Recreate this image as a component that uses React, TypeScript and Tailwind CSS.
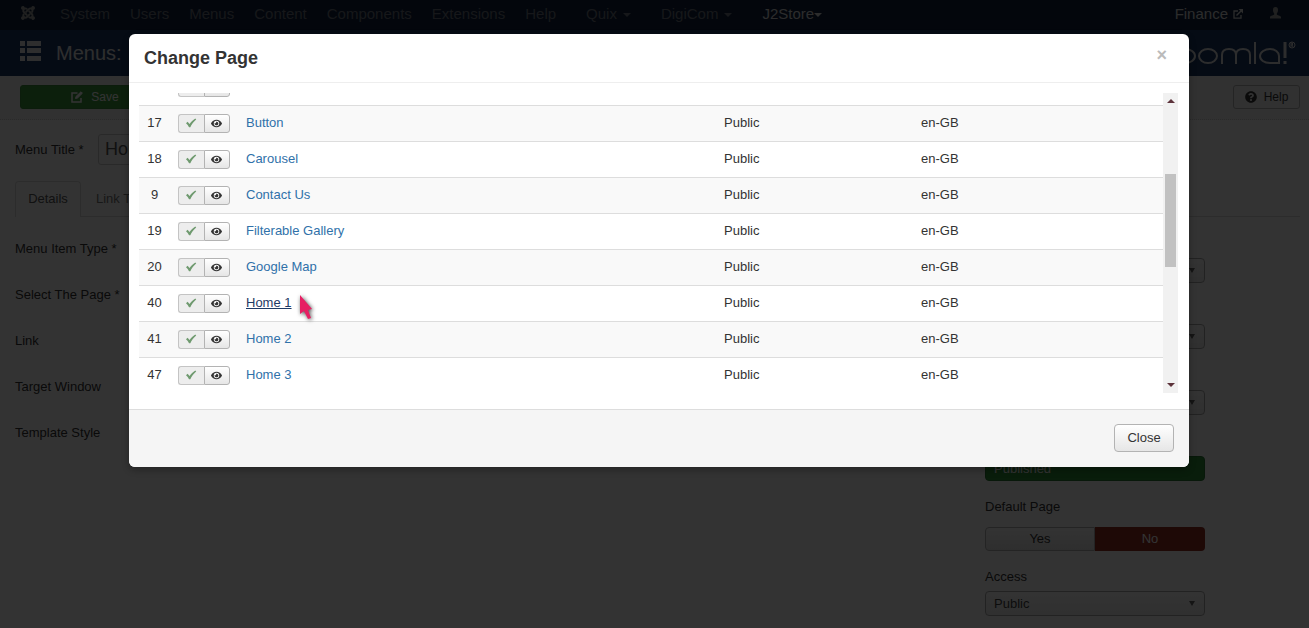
import type { ReactNode } from 'react'
import { FaEye, FaJoomla, FaQuestionCircle } from 'react-icons/fa'

type Page = { id: string; title: string; access: string; language: string; active?: boolean }

const pages: Page[] = [
  { id: '', title: '', access: '', language: '' },
  { id: '17', title: 'Button', access: 'Public', language: 'en-GB' },
  { id: '18', title: 'Carousel', access: 'Public', language: 'en-GB' },
  { id: '9', title: 'Contact Us', access: 'Public', language: 'en-GB' },
  { id: '19', title: 'Filterable Gallery', access: 'Public', language: 'en-GB' },
  { id: '20', title: 'Google Map', access: 'Public', language: 'en-GB' },
  { id: '40', title: 'Home 1', access: 'Public', language: 'en-GB', active: true },
  { id: '41', title: 'Home 2', access: 'Public', language: 'en-GB' },
  { id: '47', title: 'Home 3', access: 'Public', language: 'en-GB' },
]

const coreMenus = ['System', 'Users', 'Menus', 'Content', 'Components', 'Extensions', 'Help']
const fieldLabels = ['Menu Item Type *', 'Select The Page *', 'Link', 'Target Window', 'Template Style']

function Caret() {
  return <span className="mt-px border-x-4 border-t-4 border-x-transparent border-t-current" />
}

function CheckIcon() {
  return (
    <svg viewBox="0 0 12 10" className="h-[10px] w-3" fill="currentColor">
      <path d="M1 5.200L2.600 3.700 4.500 5.900C6 3.800 8 1.800 10.300.4l.9 1C8.600 3.700 6.800 6 5.300 9.200H4C3.300 7.600 2.300 6.300 1 5.200z" />
    </svg>
  )
}

function ListIcon() {
  return (
    <svg viewBox="0 0 21 20" className="h-5 w-[21px]" fill="currentColor">
      <path d="M0 0h5v5H0zM7 0h14v5H7zM0 7h5v5H0zM7 7h14v5H7zM0 15h5v5H0zM7 15h14v5H7z" />
    </svg>
  )
}

function EditIcon() {
  return (
    <svg viewBox="0 0 12 12" className="size-3" fill="none" stroke="currentColor" strokeWidth="1.500">
      <path d="M6.500 2H1v9h9V7" />
      <path d="M4.500 7.500l.5-2L10 .8 11.400 2.200 6.500 7z" fill="currentColor" strokeWidth="1" />
    </svg>
  )
}

function ExternalIcon() {
  return (
    <svg viewBox="0 0 10 10" className="size-[10px]" fill="none" stroke="currentColor" strokeWidth="1.300">
      <path d="M5 2H1v7.200h7V6" />
      <path d="M3.500 6.500L8.500 1.500" strokeWidth="1.500" />
      <path d="M5.500 0H10v4.500z" fill="currentColor" stroke="none" />
    </svg>
  )
}

function TopBar() {
  return (
    <nav className="flex h-[30px] items-center bg-[#10223e] pr-7 pl-5 text-[15px] leading-5 text-[#6e7580]">
      <FaJoomla className="mr-6 mb-1 size-4 text-[#a0a0a0]" />
      <div className="flex flex-1 items-center gap-5 pb-[2px]">
        {coreMenus.map((m) => (
          <a key={m} href="#">
            {m}
          </a>
        ))}
        <a href="#" className="ml-[10px] flex items-center gap-[6px]">
          Quix <Caret />
        </a>
        <a href="#" className="ml-[10px] flex items-center gap-[6px]">
          DigiCom <Caret />
        </a>
        <a href="#" className="ml-[10px] flex items-center text-[#d9d9d9]">
          J2Store <Caret />
        </a>
      </div>
      <a href="#" className="flex items-center gap-[5px] pb-[2px] text-[#d9d9d9]">
        Finance <ExternalIcon />
      </a>
      <a href="#" aria-label="User menu" className="ml-[27px] pb-1 text-[#a0a0a0]">
        <svg viewBox="0 0 11 12" className="h-3 w-[11px]" fill="currentColor">
          <path d="M5.500 0C7.300 0 8 1.300 8 3c0 1.500-.5 2.700-1.200 3.400v1.100c.2.800 3.700 1 4.200 2.500v1.500H0V10c.5-1.500 4-1.700 4.200-2.500V6.400C3.500 5.700 3 4.500 3 3c0-1.700.7-3 2.500-3z" />
        </svg>
      </a>
    </nav>
  )
}

function Logo() {
  return (
    <svg viewBox="0 0 126 30" className="h-[30px] w-[126px]" fill="none" stroke="#e0e0e0" strokeWidth="2" role="img" aria-label="Joomla!">
      <ellipse cx="14" cy="18" rx="10" ry="7" />
      <ellipse cx="37" cy="18" rx="9" ry="7" />
      <path d="M51 26V17q0-6 7-6t7 6v9M65 17q0-6 7-6t7 6v9M84 4v22" />
      <path d="M108 26v-8c0-4-4-7-9-7s-10 3-10 7 4 7 10 7h9" />
      <path d="M114 4v16M114 23v3" strokeWidth="3" />
      <circle cx="121" cy="7" r="3" strokeWidth="1" />
      <path d="M120 9V5h1.500v2H120M121 7l1 2" strokeWidth="1" />
    </svg>
  )
}

function ChosenSelect({ label, value }: { label: string; value: string }) {
  return (
    <div className="relative">
      <select
        aria-label={label}
        className="h-[25px] w-full appearance-none rounded border border-[#aaa] bg-linear-to-b from-white to-[#eee] px-2 text-[#444]"
      >
        <option>{value}</option>
      </select>
      <span className="pointer-events-none absolute top-[10px] right-[10px] border-x-[3px] border-t-[5px] border-x-transparent border-t-[#666]" />
    </div>
  )
}

function Group({ label, children }: { label: string; children: ReactNode }) {
  return (
    <fieldset>
      <legend className="mb-[10px] leading-5">{label}</legend>
      {children}
    </fieldset>
  )
}

function Sidebar() {
  return (
    <aside className="mr-[104px] w-[220px] pt-[41px]">
      <div className="flex flex-col gap-[41px]">
        <ChosenSelect label="Menu" value="" />
        <ChosenSelect label="Parent item" value="" />
        <ChosenSelect label="Ordering" value="" />
        <select
          aria-label="Status"
          className="h-[25px] w-full appearance-none rounded border border-[#2b7a36] bg-[#2f8f3a] px-2 text-white"
        >
          <option>Published</option>
        </select>
      </div>
      <div className="mt-4">
        <Group label="Default Page">
          <div className="flex h-6">
            <button className="w-1/2 rounded-l border border-[#b3b3b3] bg-linear-to-b from-white to-[#e6e6e6]">Yes</button>
            <button className="w-1/2 rounded-r bg-[#952d22] text-white">No</button>
          </div>
        </Group>
      </div>
      <label className="mt-4 block">
        <span className="mb-1 block leading-5">Access</span>
        <ChosenSelect label="Access" value="Public" />
      </label>
    </aside>
  )
}

function EditScreen() {
  return (
    <div className="h-screen overflow-hidden bg-white">
      <TopBar />
      <header className="flex h-[46px] items-center bg-[#1a3867] pr-3 pl-5 text-[#e6e6e6]">
        <span className="mb-1">
          <ListIcon />
        </span>
        <h1 className="ml-[15px] flex-1 text-xl">Menus:</h1>
        <Logo />
      </header>
      <div className="flex h-[44px] items-center justify-between border-b border-dotted border-[#d3d3d3] bg-[#f5f5f5] pr-[9px] pb-[2px] pl-5 text-xs">
        <button className="flex h-6 w-[150px] items-center justify-center gap-2 rounded-[3px] border border-[#3c8a3c] bg-[#3f9c3f] text-white">
          <EditIcon /> Save
        </button>
        <button className="flex h-6 w-[67px] items-center justify-center gap-[7px] rounded-[3px] border border-[#b3b3b3] bg-[#f3f3f3]">
          <FaQuestionCircle className="size-3" /> Help
        </button>
      </div>
      <div className="pt-[14px] pl-[15px]">
        <label className="flex h-[31px] items-center">
          <span className="w-[83px]">Menu Title *</span>
          <input
            defaultValue="Home"
            className="h-[31px] w-[290px] rounded-[3px] border border-[#ccc] px-[6px] text-lg text-[#555]"
          />
        </label>
        <div className="mt-4 mr-[9px] flex h-9 border-b border-[#ddd] text-[#555]">
          <button className="-mb-px h-9 w-[66px] rounded-t border border-b-0 border-[#ddd] bg-white pb-[2px]">Details</button>
          <button className="px-[15px] text-[#777]">Link Type</button>
        </div>
        <div className="flex justify-between">
          <div className="flex flex-col gap-[26px] pt-[22px]">
            {fieldLabels.map((l) => (
              <span key={l} className="leading-5">
                {l}
              </span>
            ))}
          </div>
          <Sidebar />
        </div>
      </div>
    </div>
  )
}

function PageRow({ page }: { page: Page }) {
  return (
    <tr className="h-9 border-t border-[#ddd] odd:bg-white even:bg-[#f9f9f9]">
      <td className="w-[31px] text-center">{page.id}</td>
      <td className="w-[68px] pl-2">
        <div className="flex">
          <button
            aria-label="Published"
            className="flex h-[19px] w-[26px] items-center justify-center rounded-l-[3px] border border-r-0 border-[#c4c4c4] bg-[#ededed] pr-[2px] text-[#6f9a6f]"
          >
            <CheckIcon />
          </button>
          <button
            aria-label="Preview"
            className="flex h-[19px] w-[26px] items-center justify-center rounded-r-[3px] border border-[#b3b3b3] bg-linear-to-b from-white to-[#e6e6e6] pr-[2px]"
          >
            <FaEye className="size-[11px]" />
          </button>
        </div>
      </td>
      <td className="pl-2">
        <a href="#" className={page.active ? 'text-[#1f3b66] underline' : 'text-[#3071a9]'}>
          {page.title}
        </a>
      </td>
      <td className="w-[197px]">{page.access}</td>
      <td className="w-[242px]">{page.language}</td>
    </tr>
  )
}

function ChangePageDialog() {
  return (
    <section
      role="dialog"
      aria-label="Change Page"
      className="overflow-hidden rounded-md bg-white shadow-[0_3px_7px_rgba(0,0,0,0.3)]"
    >
      <header className="flex h-[49px] items-center justify-between border-b border-[#eee] pr-[22px] pl-[15px]">
        <h3 className="pb-px text-lg font-bold">Change Page</h3>
        <button aria-label="Close dialog" className="pb-[6px] text-lg font-bold text-[#bbb]">
          ×
        </button>
      </header>
      <div className="flex px-[10px] pt-[10px] pb-4">
        <div className="flex h-[300px] flex-1 flex-col justify-end overflow-hidden">
          <table className="w-full table-fixed border-collapse">
            <tbody>
              {pages.map((p) => (
                <PageRow key={p.id} page={p} />
              ))}
            </tbody>
          </table>
        </div>
        <div className="mr-px flex w-[15px] flex-col items-center bg-[#f1f1f1] py-[6px]">
          <span className="border-x-4 border-b-4 border-x-transparent border-b-[#5c333b]" />
          <span className="mt-[71px] h-[93px] w-[11px] bg-[#c1c1c1]" />
          <span className="mt-auto border-x-4 border-t-4 border-x-transparent border-t-[#5c333b]" />
        </div>
      </div>
      <footer className="flex justify-end border-t border-[#ddd] bg-[#f5f5f5] px-[15px] pt-[14px] pb-[15px]">
        <button className="h-7 w-[60px] rounded border border-[#b3b3b3] bg-linear-to-b from-white to-[#e6e6e6]">Close</button>
      </footer>
    </section>
  )
}

export default function App() {
  return (
    <div className="relative font-['Liberation_Sans',Arial,sans-serif] text-[13px] leading-[18px] text-[#333]">
      <EditScreen />
      <div className="absolute inset-0 bg-black/80 pt-[34px] pr-[120px] pl-[129px]">
        <ChangePageDialog />
      </div>
      <svg viewBox="0 0 20 30" className="absolute top-[294px] left-[297px] h-[30px] w-5 drop-shadow-[1px_1px_2px_#444]">
        <path d="M3 1v19l4-3 4 8 3-1-3-8 4-1z" fill="#e61f63" />
      </svg>
    </div>
  )
}
